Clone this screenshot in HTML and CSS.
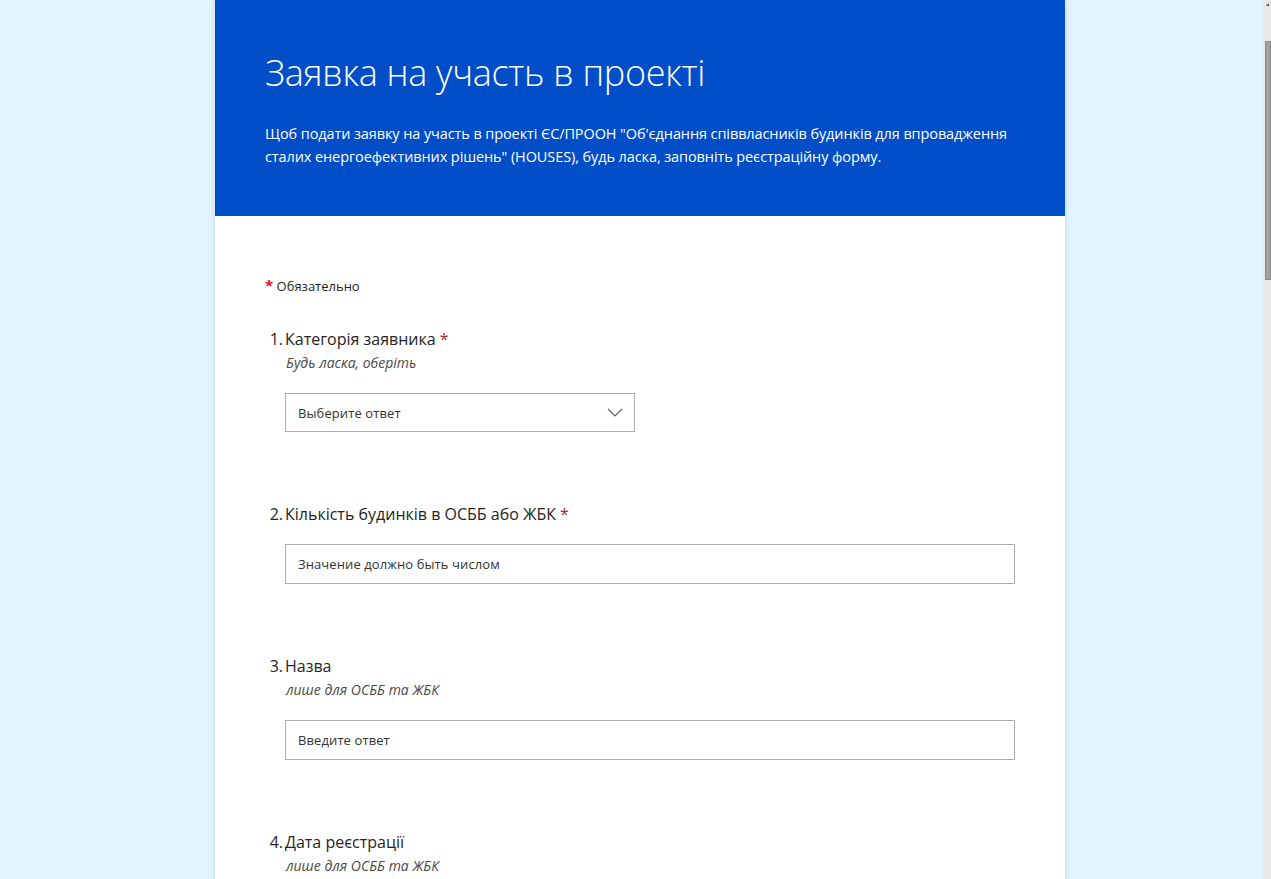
FILE: index.html
```html
<!DOCTYPE html>
<html lang="uk">
<head>
    <meta charset="UTF-8">
    <meta name="viewport" content="width=device-width, initial-scale=1.0">
    <title>Заявка на участь в проекті</title>
    <link rel="stylesheet" href="styles.css">
</head>
<body>
    <div class="page">
        <div class="form-card">
            <div class="form-header">
                <h1 class="form-title">Заявка на участь в проекті</h1>
                <p class="form-desc">Щоб подати заявку на участь в проекті ЄС/ПРООН "Об'єднання співвласників будинків для впровадження сталих енергоефективних рішень" (HOUSES), будь ласка, заповніть реєстраційну форму.</p>
            </div>

            <div class="form-body">
                <div class="required-note"><span class="req-star">*</span> Обязательно</div>

                <div class="question">
                    <div class="q-title"><span class="q-num">1.</span>Категорія заявника <span class="q-star">*</span></div>
                    <div class="q-sub">Будь ласка, оберіть</div>
                    <div class="select-box">
                        <span>Выберите ответ</span>
                        <svg class="chevron" width="16" height="9" viewBox="0 0 16 9">
                            <path d="M1 1 L8 8 L15 1" fill="none" stroke="#605e5c" stroke-width="1.1"/>
                        </svg>
                    </div>
                </div>

                <div class="question">
                    <div class="q-title"><span class="q-num">2.</span>Кількість будинків в ОСББ або ЖБК <span class="q-star">*</span></div>
                    <div class="text-box">Значение должно быть числом</div>
                </div>

                <div class="question">
                    <div class="q-title"><span class="q-num">3.</span>Назва</div>
                    <div class="q-sub">лише для ОСББ та ЖБК</div>
                    <div class="text-box">Введите ответ</div>
                </div>

                <div class="question">
                    <div class="q-title"><span class="q-num">4.</span>Дата реєстрації</div>
                    <div class="q-sub">лише для ОСББ та ЖБК</div>
                    <div class="text-box">Введите дату (M/d/yyyy)</div>
                </div>
            </div>
        </div>
    </div>

    <div class="scrollbar">
        <div class="scroll-arrow"></div>
        <div class="scroll-thumb"></div>
    </div>
</body>
</html>
```

FILE: styles.css
```css
html, body {
    margin: 0;
    height: 100%;
    overflow: hidden;
}
body {
    background-color: #e1f3fe;
    font-family: "Open Sans", "Noto Sans", sans-serif;
    color: #333333;
}
.page {
    display: flex;
    justify-content: center;
    padding-left: 9px;
}
.form-card {
    width: 850px;
    background-color: #ffffff;
    box-shadow: 0 0 6px rgba(0, 0, 0, 0.12);
    min-height: 1200px;
}
.form-header {
    background-color: #004dc8;
    color: #ffffff;
    height: 216px;
    box-sizing: border-box;
    padding: 50px 50px 0 50px;
}
.form-title {
    margin: 0;
    font-size: 36px;
    font-weight: 300;
    line-height: 46px;
    letter-spacing: -0.3px;
}
.form-desc {
    margin: 26px 0 0 0;
    font-size: 14.5px;
    line-height: 23px;
    letter-spacing: -0.1px;
    width: 750px;
}
.form-body {
    padding: 59px 50px 0 50px;
}
.required-note {
    font-size: 13px;
    line-height: 20px;
    color: #252424;
    margin-bottom: 31px;
}
.req-star {
    color: #e81123;
    font-weight: bold;
    font-size: 15px;
}
.question {
    margin-bottom: 70px;
}
.q-title {
    font-size: 16px;
    line-height: 24px;
    color: #252424;
}
.q-num {
    display: inline-block;
    width: 20px;
    text-align: right;
    margin-left: -2px;
    margin-right: 2px;
}
.q-star {
    color: #a4262c;
}
.q-sub {
    font-size: 14px;
    font-style: italic;
    line-height: 24px;
    color: #4a4a4a;
    padding-left: 21px;
}
.select-box, .text-box {
    margin: 18px 0 0 20px;
    height: 40px;
    box-sizing: border-box;
    border: 1px solid #ababab;
    font-size: 13px;
    color: #333333;
    padding: 0 12px;
    display: flex;
    align-items: center;
    letter-spacing: 0.1px;
}
.select-box {
    width: 350px;
    height: 39px;
    justify-content: space-between;
}
.text-box {
    width: 730px;
}
.chevron {
    margin-right: -1px;
}
.scrollbar {
    position: fixed;
    top: 0;
    right: 0;
    width: 8px;
    height: 100%;
    background-color: #e8e8e8;
}
.scroll-arrow {
    width: 0;
    height: 0;
    margin: 3px 0 0 3px;
    border-left: 3px solid transparent;
    border-bottom: 3px solid #505050;
}
.scroll-thumb {
    position: absolute;
    top: 41px;
    left: 2px;
    width: 6px;
    height: 239px;
    box-sizing: border-box;
    background-color: #a0a0a0;
    border: 1px solid #888888;
}
```
